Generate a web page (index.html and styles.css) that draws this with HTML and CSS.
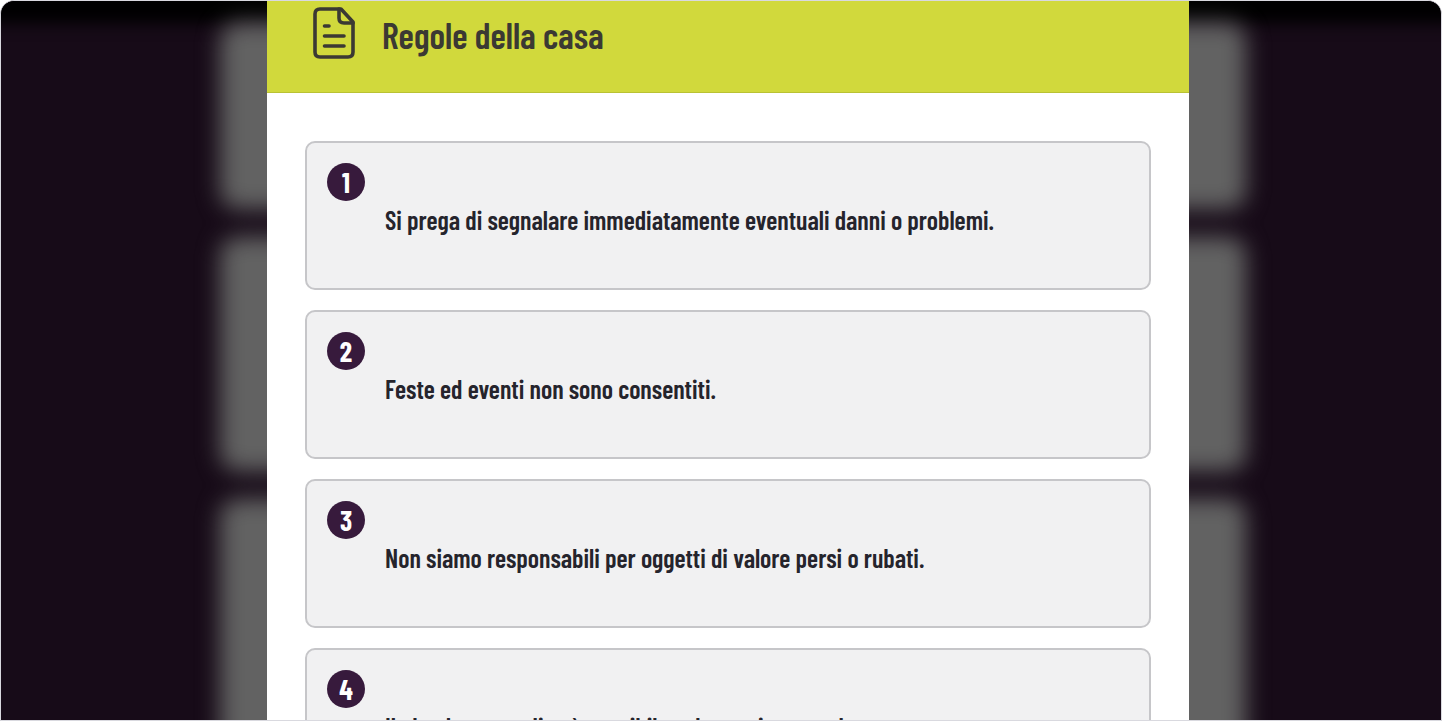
FILE: index.html
```html
<!DOCTYPE html>
<html lang="it">
<head>
<meta charset="utf-8">
<meta name="viewport" content="width=device-width, initial-scale=1">
<title>Regole della casa</title>
<link rel="stylesheet" href="styles.css">
</head>
<body>
<div class="frame">
  <div class="backdrop" aria-hidden="true">
    <div class="backdrop-bar"></div>
    <div class="backdrop-panels">
      <div class="backdrop-panel"></div>
      <div class="backdrop-panel backdrop-panel-tall"></div>
      <div class="backdrop-panel backdrop-panel-last"></div>
    </div>
  </div>
  <main class="sheet">
    <header class="sheet-header">
      <svg class="sheet-icon" viewBox="0 0 44 54" fill="none" stroke="currentColor" stroke-width="3.6" stroke-linecap="round" stroke-linejoin="round" aria-hidden="true">
        <path d="M29 3H8Q3 3 3 8V46Q3 51 8 51H36Q41 51 41 46V16Z"/>
        <path d="M27 3V12Q27 17 32 17H41"/>
        <path d="M12.500 20H17M12.500 30H32M12.500 40H32"/>
      </svg>
      <h1 class="sheet-title">Regole della casa</h1>
    </header>
    <ol class="rules">
      <li class="rule"><span class="rule-number">1</span><p class="rule-text">Si prega di segnalare immediatamente eventuali danni o problemi.</p></li>
      <li class="rule"><span class="rule-number">2</span><p class="rule-text">Feste ed eventi non sono consentiti.</p></li>
      <li class="rule"><span class="rule-number">3</span><p class="rule-text">Non siamo responsabili per oggetti di valore persi o rubati.</p></li>
      <li class="rule"><span class="rule-number">4</span><p class="rule-text">Il check-out tardivo è possibile solo previo accordo.</p></li>
    </ol>
  </main>
</div>
</body>
</html>
```
FILE: styles.css
```css
* {
  box-sizing: border-box;
}

body {
  margin: 0;
  background: #fff;
  color: #25242c;
  font-family: "Barlow Condensed", "Roboto Condensed", "Liberation Sans Narrow", "Liberation Sans", sans-serif;
}

.frame {
  position: relative;
  height: 100vh;
  overflow: hidden;
  padding: 0 252px 0 266px;
  border: 1px solid #d9d9df;
  border-radius: 14px 14px 0 0;
  background: #170b18;
}

.backdrop {
  position: absolute;
  inset: 0;
  overflow: hidden;
}

.backdrop-bar {
  height: 22px;
  margin: 0 -30px;
  background: #000;
  filter: blur(8px);
  box-shadow: 0 -20px 0 20px #000;
}

.backdrop-panels {
  display: flex;
  flex-direction: column;
  gap: 28px;
  padding: 0 195px 0 219px;
  filter: blur(11px);
}

.backdrop-panel {
  height: 186px;
  border-radius: 18px;
  background: #626262;
}

.backdrop-panel-tall {
  height: 234px;
}

.backdrop-panel-last {
  height: 280px;
}

.sheet {
  position: relative;
  background: #fff;
}

.sheet-header {
  display: flex;
  align-items: center;
  gap: 26px;
  padding: 5px 45px 32px;
  border-bottom: 1px solid #b9c233;
  background: #d1d93c;
  color: #3b3933;
}

.sheet-icon {
  width: 44px;
  height: 54px;
}

.sheet-title {
  margin: 4px 0 0;
  font-size: 36px;
  font-weight: 600;
  line-height: 44px;
}

.rules {
  display: grid;
  gap: 20px;
  margin: 0;
  padding: 48px 38px;
  list-style: none;
}

.rule {
  display: flex;
  align-items: flex-start;
  gap: 20px;
  padding: 20px;
  border: 2px solid #c6c6c9;
  border-radius: 10px;
  background: #f1f1f2;
}

.rule-number {
  flex: none;
  width: 38px;
  border-radius: 50%;
  background: #371a3c;
  color: #fff;
  font-size: 28px;
  font-weight: 700;
  line-height: 38px;
  text-align: center;
}

.rule-text {
  margin: 38px 0 29px;
  font-size: 26px;
  font-weight: 600;
  line-height: 38px;
}
```
